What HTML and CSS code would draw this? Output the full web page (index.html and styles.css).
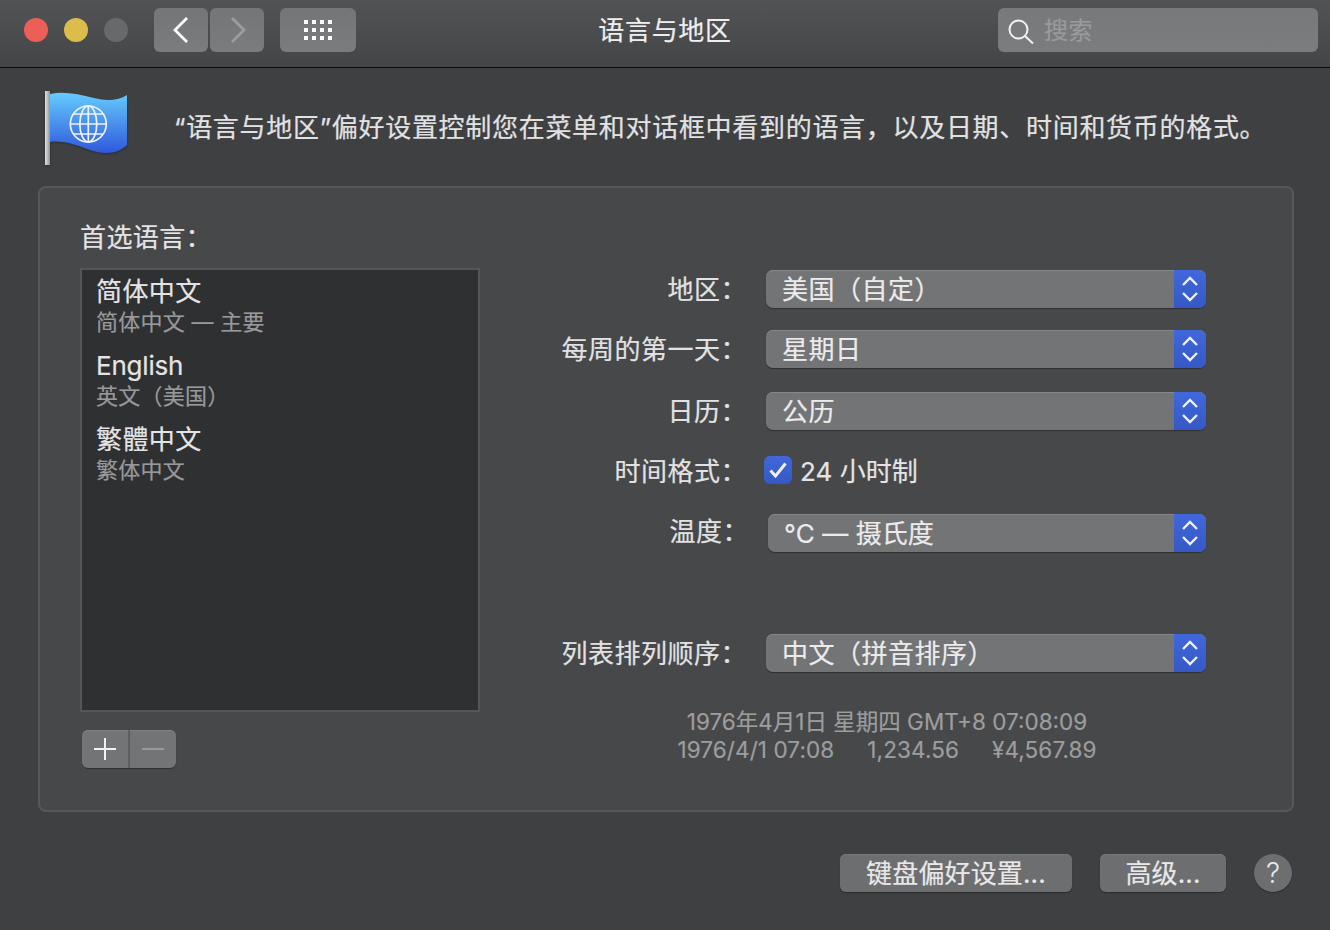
FILE: index.html
```html
<!DOCTYPE html>
<html lang="zh-CN">
<head>
<meta charset="utf-8">
<title>语言与地区</title>
<link rel="stylesheet" href="styles.css">
</head>
<body>
<div class="window">
  <header class="titlebar">
    <div class="lights">
      <span class="light red"></span>
      <span class="light yellow"></span>
      <span class="light grey"></span>
    </div>
    <div class="nav">
      <button class="tool">
        <svg width="20" height="30" viewBox="0 0 20 30"><path d="M16 3 4 15l12 12" fill="none" stroke="#fff" stroke-width="2.8"/></svg>
      </button>
      <button class="tool">
        <svg width="20" height="30" viewBox="0 0 20 30"><path d="M5 3l12 12L5 27" fill="none" stroke="#9c9d9f" stroke-width="2.8"/></svg>
      </button>
    </div>
    <button class="tool grid-btn">
      <svg width="30" height="22" viewBox="0 0 30 22" fill="#fff">
        <rect x="1" y="1" width="4" height="4"/><rect x="9" y="1" width="4" height="4"/><rect x="17" y="1" width="4" height="4"/><rect x="25" y="1" width="4" height="4"/>
        <rect x="1" y="9" width="4" height="4"/><rect x="9" y="9" width="4" height="4"/><rect x="17" y="9" width="4" height="4"/><rect x="25" y="9" width="4" height="4"/>
        <rect x="1" y="17" width="4" height="4"/><rect x="9" y="17" width="4" height="4"/><rect x="17" y="17" width="4" height="4"/><rect x="25" y="17" width="4" height="4"/>
      </svg>
    </button>
    <h1 class="title">语言与地区</h1>
    <div class="search">
      <svg width="26" height="28" viewBox="0 0 26 28"><circle cx="10.5" cy="13.5" r="9" fill="none" stroke="#f2f2f2" stroke-width="2"/><path d="M17 20l8 7.5" stroke="#f2f2f2" stroke-width="2"/></svg>
      <span class="search-text">搜索</span>
    </div>
  </header>

  <section class="intro">
    <svg class="flag" width="88" height="76" viewBox="0 0 88 76">
      <defs>
        <linearGradient id="flagFill" x1="0" y1="0" x2="0" y2="1">
          <stop offset="0" stop-color="#66cbfd"/>
          <stop offset="1" stop-color="#2f58dd"/>
        </linearGradient>
        <linearGradient id="poleFill" x1="0" y1="0" x2="1" y2="0">
          <stop offset="0" stop-color="#dfe3e6"/>
          <stop offset="1" stop-color="#8d9397"/>
        </linearGradient>
      </defs>
      <rect x="1" y="1" width="5" height="74" fill="url(#poleFill)"/>
      <path d="M6 4C20 1 34 4 50 8c12 3 24 3 33-3v50c-9 9-23 10-37 5C32 55 20 50 6 52z" fill="url(#flagFill)"/>
      <g fill="none" stroke="#eef3fb" stroke-width="1.7">
        <circle cx="44.3" cy="34" r="18"/>
        <ellipse cx="44.3" cy="34" rx="8.5" ry="18"/>
        <path d="M44.3 16v36M26.3 34h36M29.3 24h30M29.3 44h30"/>
      </g>
    </svg>
    <p class="intro-text">“语言与地区”偏好设置控制您在菜单和对话框中看到的语言，以及日期、时间和货币的格式。</p>
  </section>

  <main class="panel">
    <div class="left">
      <h2 class="heading">首选语言：</h2>
      <ul class="langs">
        <li class="lang"><span class="lang-name">简体中文</span><span class="lang-sub">简体中文 — 主要</span></li>
        <li class="lang"><span class="lang-name latin">English</span><span class="lang-sub">英文（美国）</span></li>
        <li class="lang"><span class="lang-name">繁體中文</span><span class="lang-sub">繁体中文</span></li>
      </ul>
      <div class="addremove">
        <button class="seg seg-add">
          <svg width="24" height="24" viewBox="0 0 24 24"><path d="M1 12h22M12 1v22" stroke="#f2f2f2" stroke-width="2"/></svg>
        </button>
        <button class="seg seg-remove">
          <svg width="24" height="24" viewBox="0 0 24 24"><path d="M1 12h22" stroke="#98999b" stroke-width="2"/></svg>
        </button>
      </div>
    </div>

    <div class="form">
      <div class="row r-region">
        <span class="label">地区：</span>
        <div class="select"><span class="sel-text">美国（自定）</span><span class="stepper"><svg width="18" height="28" viewBox="0 0 18 28"><path d="M2 10l7-7 7 7M2 18l7 7 7-7" fill="none" stroke="#eef1fb" stroke-width="2.4"/></svg></span></div>
      </div>
      <div class="row r-week">
        <span class="label">每周的第一天：</span>
        <div class="select"><span class="sel-text">星期日</span><span class="stepper"><svg width="18" height="28" viewBox="0 0 18 28"><path d="M2 10l7-7 7 7M2 18l7 7 7-7" fill="none" stroke="#eef1fb" stroke-width="2.4"/></svg></span></div>
      </div>
      <div class="row r-cal">
        <span class="label">日历：</span>
        <div class="select"><span class="sel-text">公历</span><span class="stepper"><svg width="18" height="28" viewBox="0 0 18 28"><path d="M2 10l7-7 7 7M2 18l7 7 7-7" fill="none" stroke="#eef1fb" stroke-width="2.4"/></svg></span></div>
      </div>
      <div class="row r-time">
        <span class="label label-time">时间格式：</span>
        <div class="check-wrap">
          <span class="checkbox"><svg width="20" height="20" viewBox="0 0 20 20"><path d="M2.5 10.5l5 5.5L17.5 3.5" fill="none" stroke="#eef1fb" stroke-width="3"/></svg></span>
          <span class="check-text">24 小时制</span>
        </div>
      </div>
      <div class="row r-temp">
        <span class="label label-temp">温度：</span>
        <div class="select select-temp"><span class="sel-text sel-temp">°C — 摄氏度</span><span class="stepper"><svg width="18" height="28" viewBox="0 0 18 28"><path d="M2 10l7-7 7 7M2 18l7 7 7-7" fill="none" stroke="#eef1fb" stroke-width="2.4"/></svg></span></div>
      </div>
      <div class="row r-sort">
        <span class="label">列表排列顺序：</span>
        <div class="select"><span class="sel-text">中文（拼音排序）</span><span class="stepper"><svg width="18" height="28" viewBox="0 0 18 28"><path d="M2 10l7-7 7 7M2 18l7 7 7-7" fill="none" stroke="#eef1fb" stroke-width="2.4"/></svg></span></div>
      </div>
      <div class="sample">
        <div class="sample-line">1976年4月1日 星期四 GMT+8 07:08:09</div>
        <div class="sample-line sample-nums"><span>1976/4/1 07:08</span><span>1,234.56</span><span>¥4,567.89</span></div>
      </div>
    </div>
  </main>

  <footer class="bottom">
    <button class="btn btn-kbd">键盘偏好设置...</button>
    <button class="btn btn-adv">高级...</button>
    <button class="help">?</button>
  </footer>
</div>
</body>
</html>
```

FILE: styles.css
```css
* { box-sizing: border-box; }
html, body { margin: 0; padding: 0; height: 100%; }
body {
  background: #3f4042;
  font-family: Inter, "Noto Sans CJK SC", "Liberation Sans", sans-serif;
  color: #e4e4e5;
  -webkit-text-stroke: .2px;
  overflow: hidden;
}
button { font: inherit; color: inherit; border: 0; padding: 0; }
h1, h2, p, ul { margin: 0; padding: 0; font-weight: 400; }
ul { list-style: none; }

.window { width: 1330px; height: 930px; display: flex; flex-direction: column; }

.titlebar {
  position: relative;
  flex: none;
  height: 68px;
  display: flex;
  align-items: center;
  padding: 0 12px 7px 24px;
  background: linear-gradient(#525355, #444547);
  border-bottom: 1px solid #0d0d0d;
}
.lights { display: flex; gap: 16px; }
.light { width: 24px; height: 24px; border-radius: 50%; }
.red { background: #ec5f58; }
.yellow { background: #dcbc4a; }
.grey { background: #68696b; }
.nav { display: flex; gap: 2px; margin-left: 26px; }
.tool {
  width: 54px;
  height: 44px;
  display: flex;
  align-items: center;
  justify-content: center;
  border-radius: 6px;
  background: linear-gradient(#747577, #7b7c7e);
}
.grid-btn { width: 76px; margin-left: 16px; }
.title {
  position: absolute;
  left: 0;
  right: 0;
  top: 12px;
  text-align: center;
  font-size: 26px;
  line-height: 38px;
  letter-spacing: .7px;
  color: #eeeeef;
}
.search {
  margin-left: auto;
  width: 320px;
  height: 44px;
  display: flex;
  align-items: center;
  gap: 10px;
  padding-left: 10px;
  border-radius: 6px;
  background: linear-gradient(#78797b, #7b7c7e);
}
.search-text { font-size: 24px; color: #999a9c; letter-spacing: .5px; margin-bottom: 4px; }

.intro {
  flex: none;
  height: 118px;
  display: flex;
  align-items: center;
  padding: 2px 0 0 44px;
}
.flag { flex: none; filter: drop-shadow(0 1px 1px rgba(0,0,0,.3)); }
.intro-text {
  margin-left: 42px;
  font-size: 26px;
  line-height: 38px;
  letter-spacing: .7px;
  white-space: nowrap;
  color: #e2e2e3;
}

.panel {
  flex: none;
  margin-left: 38px;
  width: 1256px;
  height: 626px;
  display: flex;
  border: 2px solid #565759;
  border-radius: 8px;
  background: #47484a;
}
.left { width: 440px; padding: 31px 0 0 40px; flex: none; }
.heading {
  font-size: 26px;
  line-height: 38px;
  letter-spacing: .4px;
  color: #e4e4e5;
}
.langs {
  width: 400px;
  height: 444px;
  margin-top: 11px;
  padding-top: 3px;
  background: #2f3032;
  border: 2px solid #555658;
}
.lang { display: flex; flex-direction: column; padding-left: 14px; height: 74px; }
.lang-name { font-size: 26px; line-height: 38px; letter-spacing: .4px; color: #e4e4e5; }
.latin { letter-spacing: -.2px; }
.lang-sub { font-size: 22px; line-height: 30px; letter-spacing: .25px; color: #98999b; margin-top: -4px; }
.addremove { display: flex; margin: 18px 0 0 2px; width: 94px; height: 38px; }
.seg {
  display: flex;
  align-items: center;
  justify-content: center;
  height: 38px;
  background: #737476;
  box-shadow: inset 0 1px 0 #808183, 0 1px 1px rgba(0,0,0,.35);
}
.seg-add { width: 48px; border-radius: 6px 0 0 6px; border-right: 2px solid #5f6062; }
.seg-remove { width: 46px; border-radius: 0 6px 6px 0; }

.form { width: 726px; padding-top: 82px; flex: none; position: relative; }
.row { display: flex; align-items: center; height: 38px; }
.r-week { margin-top: 22px; }
.r-cal { margin-top: 24px; }
.r-time { margin-top: 21px; }
.r-temp { margin-top: 25px; }
.r-sort { margin-top: 82px; }
.label {
  width: 286px;
  flex: none;
  text-align: right;
  padding: 0 19px 4px 0;
  font-size: 26px;
  letter-spacing: .5px;
  color: #e2e2e3;
  white-space: nowrap;
}
.label-time { padding-bottom: 2px; }
.label-temp { width: 288px; padding: 0 19px 8px 0; }
.select {
  width: 440px;
  height: 38px;
  display: flex;
  align-items: center;
  justify-content: space-between;
  padding-left: 16px;
  border-radius: 7px;
  background: #737476;
  box-shadow: inset 0 1px 0 #868789, 0 1px 1px rgba(0,0,0,.35);
  overflow: hidden;
}
.select-temp { width: 438px; }
.sel-text { font-size: 26px; letter-spacing: .5px; color: #ebebec; white-space: nowrap; padding-bottom: 4px; }
.sel-temp { letter-spacing: .1px; }
.stepper {
  width: 32px;
  height: 38px;
  display: flex;
  align-items: center;
  justify-content: center;
  background: linear-gradient(#4068dc, #3558c4);
}
.check-wrap { display: flex; align-items: center; gap: 8px; margin-left: -2px; }
.checkbox {
  width: 28px;
  height: 28px;
  display: flex;
  align-items: center;
  justify-content: center;
  border-radius: 6px;
  background: linear-gradient(#4068dc, #3558c4);
}
.check-text { font-size: 26px; letter-spacing: .05px; color: #e4e4e5; padding-bottom: 2px; }
.sample {
  margin-top: 36px;
  margin-left: 60px;
  width: 694px;
  text-align: center;
  font-size: 22.5px;
  line-height: 28px;
  color: #9c9d9f;
  position: absolute;
  left: 0;
  display: block;
}
.sample-line { white-space: nowrap; }
.sample-nums { display: flex; justify-content: center; gap: 33px; letter-spacing: .1px; }

.bottom {
  flex: none;
  height: 118px;
  display: flex;
  align-items: flex-start;
  padding: 42px 38px 0 840px;
}
.btn {
  height: 38px;
  padding-top: 1px;
  border-radius: 6px;
  background: #6d6e70;
  font-size: 26px;
  line-height: 36px;
  letter-spacing: .15px;
  color: #e8e8e9;
  box-shadow: inset 0 1px 0 #777879, 0 1px 1px rgba(0,0,0,.35);
}
.btn-kbd { width: 232px; }
.btn-adv { width: 126px; margin-left: 28px; }
.help {
  width: 38px;
  height: 38px;
  margin-left: 28px;
  border-radius: 50%;
  background: #6d6e70;
  font-size: 28px;
  font-weight: 300;
  -webkit-text-stroke: 0;
  color: #e8e8e9;
  box-shadow: 0 1px 1px rgba(0,0,0,.35);
}
```
